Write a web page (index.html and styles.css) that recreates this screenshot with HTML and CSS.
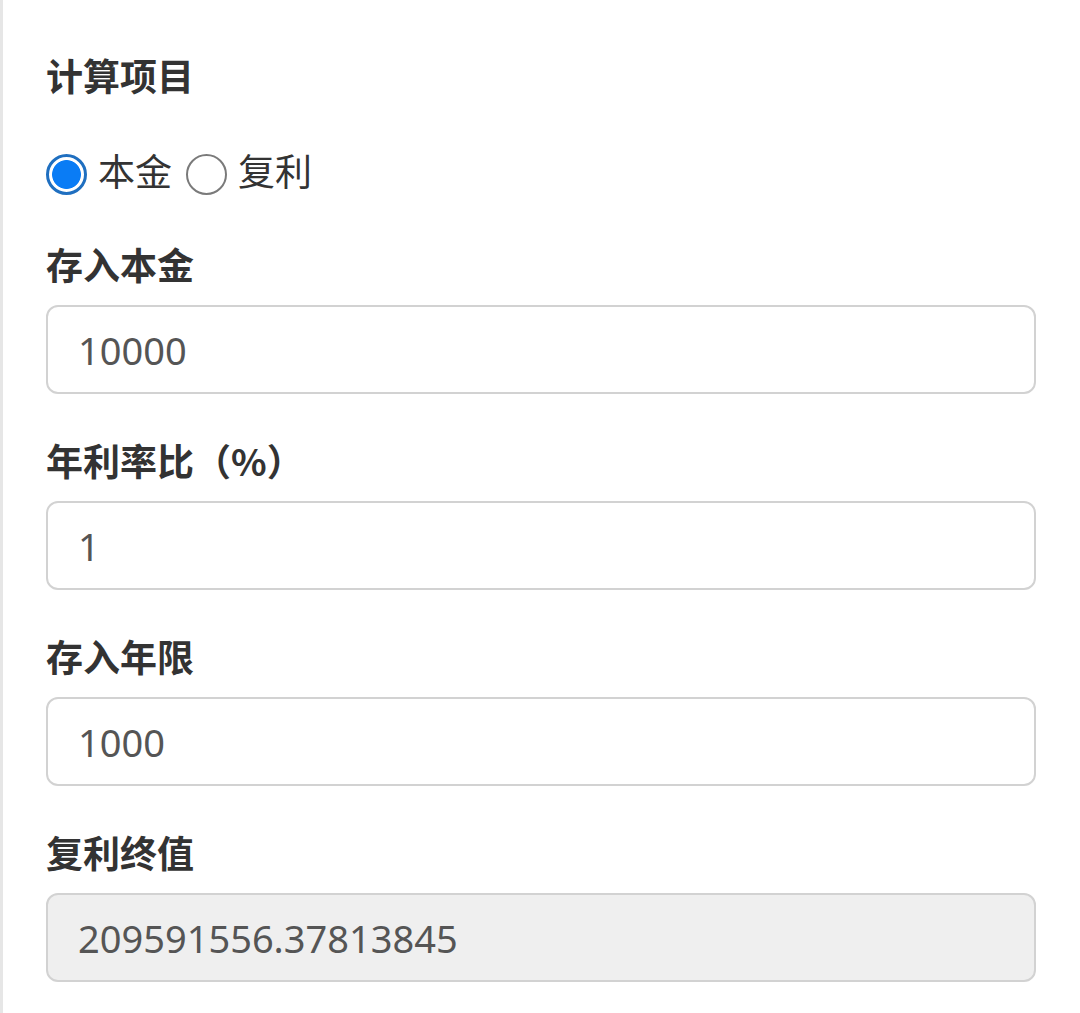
FILE: index.html
```html
<!DOCTYPE html>
<html lang="zh-CN">
<head>
<meta charset="utf-8">
<title>复利计算</title>
<link rel="stylesheet" href="styles.css">
</head>
<body>
<div class="page">
  <div class="title">计算项目</div>
  <div class="radios">
    <label class="radio"><input type="radio" name="mode" checked><span class="radio-text">本金</span></label>
    <label class="radio"><input type="radio" name="mode"><span class="radio-text">复利</span></label>
  </div>
  <div class="field">
    <div class="label">存入本金</div>
    <input class="input" type="text" value="10000">
  </div>
  <div class="field">
    <div class="label">年利率比（%）</div>
    <input class="input" type="text" value="1">
  </div>
  <div class="field">
    <div class="label">存入年限</div>
    <input class="input" type="text" value="1000">
  </div>
  <div class="field">
    <div class="label">复利终值</div>
    <input class="input readonly" type="text" value="209591556.37813845" readonly>
  </div>
</div>
</body>
</html>
```
FILE: styles.css
```css
html, body {
  margin: 0;
  padding: 0;
  background: #ffffff;
}
body {
  font-family: "Noto Sans", "Noto Sans CJK SC", sans-serif;
  color: #333333;
}
.page {
  box-sizing: border-box;
  min-height: 100vh;
  border-left: 3px solid #e6e6e6;
  padding: 53px 44px 0 43px;
}
.title, .label {
  font-family: "Noto Sans CJK SC", sans-serif;
  font-size: 37px;
  font-weight: 700;
  line-height: 44px;
  height: 44px;
  color: #333333;
}
.radios {
  display: flex;
  align-items: center;
  height: 50px;
  margin-top: 50px;
  margin-bottom: 45px;
}
.radio {
  display: flex;
  align-items: center;
  margin-right: 14px;
}
.radio input {
  appearance: none;
  -webkit-appearance: none;
  box-sizing: border-box;
  width: 41px;
  height: 41px;
  margin: 4px 11px 0 0;
  border-radius: 50%;
  border: 2px solid #7a7a7a;
  background: #ffffff;
}
.radio input:checked {
  border: 3px solid #1f6fc0;
  background: radial-gradient(circle, #0a7cf5 0, #0a7cf5 14px, #ffffff 14.8px);
}
.radio-text {
  font-family: "Noto Sans CJK SC", sans-serif;
  font-size: 37px;
  line-height: 44px;
  margin-bottom: 4px;
  color: #333333;
}
.field {
  display: flex;
  flex-direction: column;
  margin-bottom: 44px;
}
.label {
  margin-bottom: 19px;
}
.input {
  box-sizing: border-box;
  width: 100%;
  height: 89px;
  margin: 0;
  padding: 0 0 0 30px;
  border: 2px solid #d2d2d2;
  border-radius: 12px;
  background: #ffffff;
  font-family: "Noto Sans", sans-serif;
  font-size: 38px;
  color: #555555;
  outline: none;
}
.input.readonly {
  background: #efefef;
}
```
